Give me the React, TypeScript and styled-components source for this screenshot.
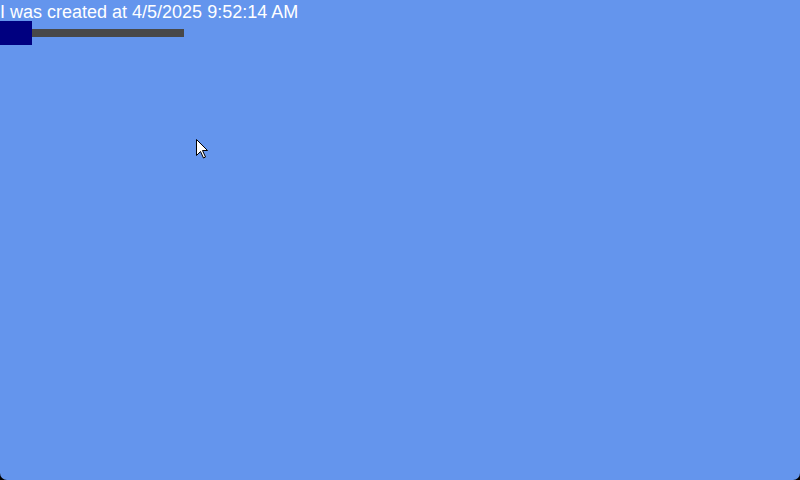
import React from "react";
import styled, { createGlobalStyle } from "styled-components";

const Global = createGlobalStyle`
  html, body {
    margin: 0;
    padding: 0;
    background: #000;
    width: 800px;
    height: 480px;
    overflow: hidden;
  }
`;

const Screen = styled.div`
  position: relative;
  width: 800px;
  height: 480px;
  background: #6495ed;
  border-radius: 0 0 7px 7px;
  overflow: hidden;
  font-family: "Liberation Sans", Arial, sans-serif;
`;

const Caption = styled.div`
  color: #ffffff;
  font-size: 18px;
  line-height: 24px;
  height: 21px;
  white-space: nowrap;
`;

const ProgressRow = styled.div`
  display: flex;
  align-items: center;
  height: 24px;
`;

const Handle = styled.div`
  width: 32px;
  height: 24px;
  background: #000080;
`;

const Track = styled.div`
  width: 152px;
  height: 8px;
  background: #484848;
`;

const Cursor = styled.svg`
  position: absolute;
  left: 196px;
  top: 139px;
`;

export default function App() {
  return (
    <>
      <Global />
      <Screen>
        <Caption>I was created at 4/5/2025 9:52:14 AM</Caption>
        <ProgressRow>
          <Handle />
          <Track />
        </ProgressRow>
        <Cursor width="13" height="20" viewBox="0 0 13 20">
          <path
            d="M0.5 0.5 L0.5 16.5 L4.5 12.5 L7.5 19 L9.5 18 L6.5 11.5 L11.5 11.5 Z"
            fill="#ffffff"
            stroke="#000000"
            strokeWidth="1"
            strokeLinejoin="miter"
          />
        </Cursor>
      </Screen>
    </>
  );
}
